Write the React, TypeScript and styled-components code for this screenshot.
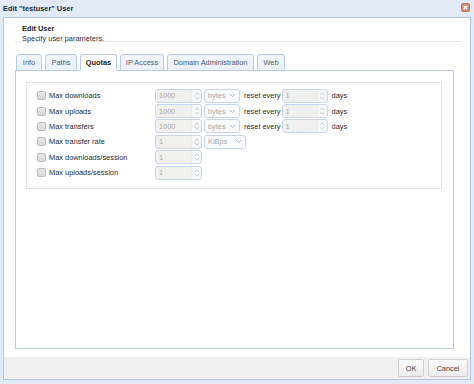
import React from 'react';
import styled, { createGlobalStyle } from 'styled-components';

const Colors = {
  frame: '#e2eaf7',
  frameBorder: '#b4c8e6',
  tabBorder: '#b8cae6',
  tabBg: '#eaf0f9',
  fieldBorder: '#c6d5ed',
  disabledBg: '#f0f0ee',
  text: '#222222',
  muted: '#a8a8a8',
  footer: '#f0f0f0',
};

const GlobalStyle = createGlobalStyle`
  html, body {
    margin: 0;
    padding: 0;
    background: ${Colors.frame};
    font-family: "Liberation Sans", Arial, sans-serif;
    font-size: 7.4px;
    color: ${Colors.text};
  }
`;

interface QuotaRow {
  label: string;
  value?: string;
  unit?: string;
  unitWidth?: number;
  reset?: boolean;
}

const rows: QuotaRow[] = [
  { label: 'Max downloads', value: '1000', unit: 'bytes', unitWidth: 36, reset: true },
  { label: 'Max uploads', value: '1000', unit: 'bytes', unitWidth: 36, reset: true },
  { label: 'Max transfers', value: '1000', unit: 'bytes', unitWidth: 36, reset: true },
  { label: 'Max transfer rate', value: '1', unit: 'KiBps', unitWidth: 42 },
  { label: 'Max downloads/session', value: '1' },
  { label: 'Max uploads/session', value: '1' },
];

const tabs = [
  { name: 'Info', width: 26 },
  { name: 'Paths', width: 32 },
  { name: 'Quotas', width: 37 },
  { name: 'IP Access', width: 44 },
  { name: 'Domain Administration', width: 87 },
  { name: 'Web', width: 28 },
];

const Spinner = ({ value, width }: { value: string; width: number }) => (
  <SpinBox style={{ width }}>
    <SpinValue>{value}</SpinValue>
    <SpinArrows>
      <svg width="6" height="10" viewBox="0 0 6 10">
        <path d="M1 4 L3 1.8 L5 4" fill="none" stroke="#b8c8de" strokeWidth="0.9" />
        <path d="M1 6 L3 8.2 L5 6" fill="none" stroke="#b8c8de" strokeWidth="0.9" />
      </svg>
    </SpinArrows>
  </SpinBox>
);

const Select = ({ value, width }: { value: string; width: number }) => (
  <SelectBox style={{ width }}>
    <span>{value}</span>
    <svg width="7" height="5" viewBox="0 0 7 5">
      <path d="M1 1 L3.5 3.5 L6 1" fill="none" stroke="#9fb6d8" strokeWidth="1" />
    </svg>
  </SelectBox>
);

const App = () => {
  return (
    <Window>
      <GlobalStyle />
      <TitleBar>
        <Title>Edit "testuser" User</Title>
        <CloseButton>
          <svg width="5" height="5" viewBox="0 0 5 5">
            <path d="M0.7 0.7 L4.3 4.3 M4.3 0.7 L0.7 4.3" stroke="#fff" strokeWidth="1.3" />
          </svg>
        </CloseButton>
      </TitleBar>
      <Body>
        <Header>
          <HeaderTitle>Edit User</HeaderTitle>
          <HeaderText>Specify user parameters.</HeaderText>
        </Header>
        <TabStrip>
          {tabs.map((tab) => (
            <Tab key={tab.name} active={tab.name === 'Quotas'} style={{ width: tab.width }}>
              {tab.name}
            </Tab>
          ))}
        </TabStrip>
        <Panel>
          <Fieldset>
            {rows.map((row) => (
              <Row key={row.label}>
                <Checkbox />
                <Label>{row.label}</Label>
                {row.value && <Spinner value={row.value} width={47} />}
                {row.unit && <Select value={row.unit} width={row.unitWidth || 36} />}
                {row.reset && (
                  <>
                    <ResetText>reset every</ResetText>
                    <Spinner value="1" width={46} />
                    <Days>days</Days>
                  </>
                )}
              </Row>
            ))}
          </Fieldset>
        </Panel>
        <Footer>
          <Button style={{ width: 26 }}>OK</Button>
          <Button style={{ width: 40 }}>Cancel</Button>
        </Footer>
      </Body>
    </Window>
  );
};

export default App;

const Window = styled.div`
  width: 474px;
  height: 384px;
  box-sizing: border-box;
  display: flex;
  flex-direction: column;
  padding: 0 3px 4px 3px;
  background: ${Colors.frame};
`;

const TitleBar = styled.div`
  height: 17px;
  display: flex;
  align-items: center;
  justify-content: space-between;
  padding-right: 1px;
`;

const Title = styled.div`
  font-weight: bold;
  color: #1f2a3a;
`;

const CloseButton = styled.div`
  width: 9px;
  height: 9px;
  border-radius: 2px;
  background: #d58a6c;
  border: 1px solid #c07458;
  box-sizing: border-box;
  display: flex;
  align-items: center;
  justify-content: center;
  margin-top: -2px;
`;

const Body = styled.div`
  flex: 1;
  display: flex;
  flex-direction: column;
  background: #fff;
  border: 1px solid ${Colors.frameBorder};
`;

const Header = styled.div`
  margin: 0 9px 0 11px;
  padding: 5px 0 4px 7px;
  border-bottom: 1px solid #e8e8e8;
  height: 14px;
  line-height: 9px;
`;

const HeaderTitle = styled.div`
  font-weight: bold;
  color: #222;
  margin-top: 1px;
`;

const HeaderText = styled.div`
  color: #333;
  margin-top: 1px;
`;

const TabStrip = styled.div`
  display: flex;
  gap: 3px;
  margin: 11px 0 0 12px;
  height: 17px;
  align-items: flex-end;
  position: relative;
  z-index: 1;
`;

const Tab = styled.div<{ active: boolean }>`
  box-sizing: border-box;
  height: 17px;
  border: 1px solid ${Colors.tabBorder};
  border-bottom: ${({ active }) => (active ? '1px solid #fff' : `1px solid ${Colors.tabBorder}`)};
  border-radius: 3px 3px 0 0;
  background: ${({ active }) => (active ? '#fff' : `linear-gradient(#f2f6fc, ${Colors.tabBg})`)};
  font-weight: ${({ active }) => (active ? 'bold' : 'normal')};
  color: ${({ active }) => (active ? '#1a1a1a' : '#505a66')};
  display: flex;
  align-items: center;
  justify-content: center;
  white-space: nowrap;
  margin-bottom: -1px;
`;

const Panel = styled.div`
  margin: 0 16px 0 11px;
  height: 279px;
  box-sizing: border-box;
  border: 1px solid ${Colors.tabBorder};
  padding: 11px 11px 0 10px;
`;

const Fieldset = styled.div`
  height: 107px;
  box-sizing: border-box;
  border: 1px solid #e3e3e3;
  padding: 5px 0 0 10px;
  display: flex;
  flex-direction: column;
`;

const Row = styled.div`
  height: 15.4px;
  display: flex;
  align-items: center;
`;

const Checkbox = styled.div`
  width: 9px;
  height: 9px;
  box-sizing: border-box;
  border: 1px solid #bdbdbd;
  border-radius: 2px;
  background: linear-gradient(#e8e8e8, #d8d8d8);
  margin-right: 3px;
`;

const Label = styled.div`
  width: 106px;
  color: #2a2a2a;
  white-space: nowrap;
`;

const SpinBox = styled.div`
  height: 14px;
  box-sizing: border-box;
  border: 1px solid ${Colors.fieldBorder};
  border-radius: 3px;
  background: ${Colors.disabledBg};
  display: flex;
  align-items: center;
  justify-content: space-between;
  padding-left: 3px;
`;

const SpinValue = styled.span`
  color: ${Colors.muted};
`;

const SpinArrows = styled.div`
  width: 9px;
  height: 12px;
  display: flex;
  align-items: center;
  justify-content: center;
  border-left: 1px solid #e6ebf2;
  border-radius: 0 3px 3px 0;
  background: #f7f8fa;
`;

const SelectBox = styled.div`
  height: 14px;
  box-sizing: border-box;
  margin-left: 2px;
  border: 1px solid ${Colors.fieldBorder};
  border-radius: 3px;
  background: #fafbfd;
  display: flex;
  align-items: center;
  justify-content: space-between;
  padding: 0 3px 0 3px;
  color: ${Colors.muted};
`;

const ResetText = styled.div`
  margin: 0 1px 0 4px;
  color: #2a2a2a;
  white-space: nowrap;
`;

const Days = styled.div`
  margin-left: 4px;
  color: #2a2a2a;
`;

const Footer = styled.div`
  margin-top: auto;
  height: 22px;
  background: ${Colors.footer};
  display: flex;
  align-items: center;
  justify-content: flex-end;
  gap: 4px;
  padding-right: 2px;
`;

const Button = styled.div`
  height: 18px;
  box-sizing: border-box;
  border: 1px solid #cfcfcf;
  border-radius: 2px;
  background: linear-gradient(#fbfbfb, #ececec);
  color: #444;
  display: flex;
  align-items: center;
  justify-content: center;
`;
